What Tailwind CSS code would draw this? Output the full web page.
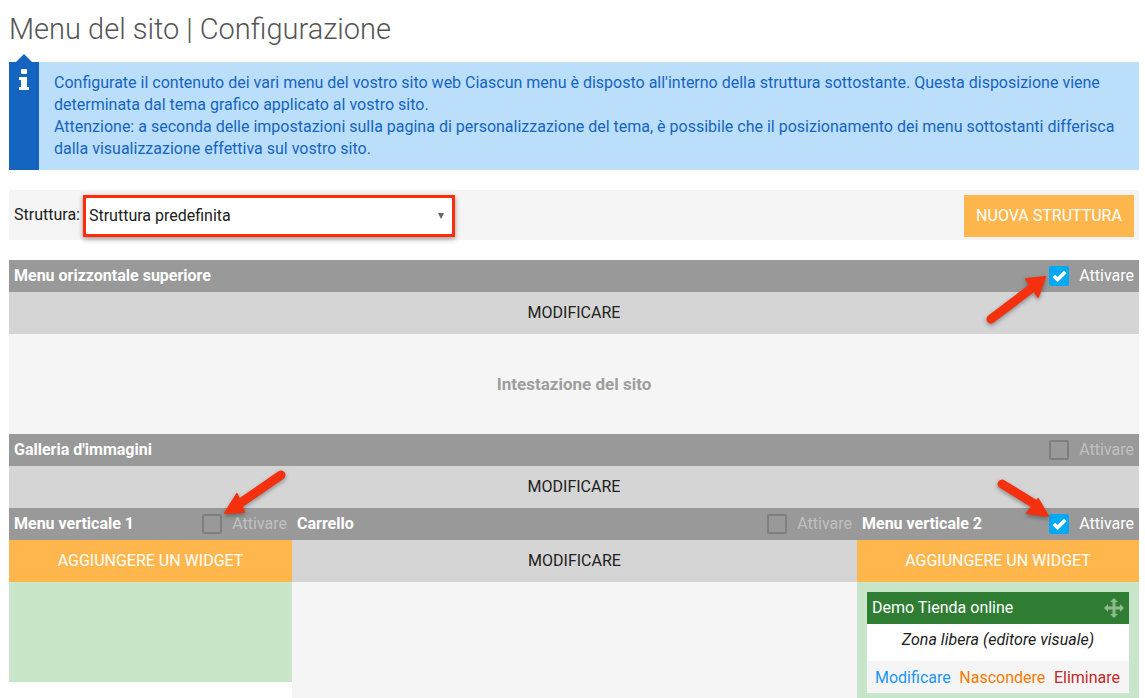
<!DOCTYPE html>
<html>
<head>
    <title>Menu del sito</title>
    <script src="https://cdn.jsdelivr.net/npm/@tailwindcss/browser@4"></script>
</head>
<body class="bg-white font-['Roboto',sans-serif] text-[16px] text-[#212121] overflow-hidden">
<div class="w-[1139px] h-[698px] overflow-hidden relative pl-[9px]">
    <h1 class="h-[62px] pt-[10px] text-[29px] leading-[38px] font-light text-[#555]">Menu del sito | Configurazione</h1>

    <div class="flex h-[108px] bg-[#bbdefb] text-[#1565c0] relative">
        <div class="w-[30px] bg-[#1565c0] flex justify-center pt-[7px] relative">
            <span class="absolute left-[7px] top-[-8px] w-0 h-0 border-x-[8px] border-x-transparent border-b-[8px] border-b-[#1565c0]"></span>
            <svg width="10" height="21" viewBox="0 0 10 21" fill="#fff"><rect x="2" y="0" width="6" height="5" rx="1"/><path d="M0 8h8v10h2v3H0v-3h2v-7H0z"/></svg>
        </div>
        <p class="pl-[15px] pt-[10px] text-[16px] leading-[22px]">Configurate il contenuto dei vari menu del vostro sito web Ciascun menu è disposto all'interno della struttura sottostante. Questa disposizione viene<br>determinata dal tema grafico applicato al vostro sito.<br>Attenzione: a seconda delle impostazioni sulla pagina di personalizzazione del tema, è possibile che il posizionamento dei menu sottostanti differisca<br>dalla visualizzazione effettiva sul vostro sito.</p>
    </div>

    <div class="mt-[20px] h-[50px] bg-[#f5f5f5] flex items-center justify-between pl-[5px] pr-[5px] pt-[1px]">
        <div class="flex items-center">
            <span class="mr-[3px] mb-[2px]">Struttura:</span>
            <div class="w-[372px] h-[42px] bg-white border-[3px] border-[#fb2d0b] shadow-[0_2px_5px_rgba(0,0,0,0.4)] flex items-center justify-between pl-[3px] pr-[8px]">
                <span>Struttura predefinita</span>
                <span class="w-0 h-0 border-x-[3.5px] border-x-transparent border-t-[6px] border-t-[#666]"></span>
            </div>
        </div>
        <button class="w-[170px] h-[42px] bg-[#ffb74d] text-white text-[16px]">NUOVA STRUTTURA</button>
    </div>

    <div class="mt-[20px] h-[32px] bg-[#999] flex items-center justify-between pl-[5px] pr-[5px] text-white">
        <b class="font-bold">Menu orizzontale superiore</b>
        <div class="flex items-center gap-[10px]">
            <span class="w-[20px] h-[20px] rounded-[2px] bg-[#03a9f4] flex items-center justify-center">
                <svg width="15" height="12" viewBox="0 0 15 12"><path d="M1.8 6L5.6 9.600L13.200 2" fill="none" stroke="#fff" stroke-width="3.600"/></svg>
            </span>
            <span>Attivare</span>
        </div>
    </div>
    <div class="h-[42px] bg-[#d5d5d5] flex items-center justify-center">MODIFICARE</div>
    <div class="h-[100px] bg-[#f5f5f5] flex items-center justify-center pt-[1px] font-bold text-[17px] text-[#9e9e9e]">Intestazione del sito</div>

    <div class="h-[32px] bg-[#999] flex items-center justify-between pl-[5px] pr-[5px] text-white">
        <b class="font-bold">Galleria d'immagini</b>
        <div class="flex items-center gap-[10px] text-white/40">
            <span class="w-[20px] h-[20px] rounded-[2px] border-2 border-[#7f7f7f]"></span>
            <span>Attivare</span>
        </div>
    </div>
    <div class="h-[42px] bg-[#d5d5d5] flex items-center justify-center">MODIFICARE</div>

    <div class="grid grid-cols-[283px_565px_282px]">
        <div>
            <div class="h-[32px] bg-[#999] flex items-center justify-between pl-[5px] pr-[5px] text-white">
                <b class="font-bold">Menu verticale 1</b>
                <div class="flex items-center gap-[10px] text-white/40">
                    <span class="w-[20px] h-[20px] rounded-[2px] border-2 border-[#7f7f7f]"></span>
                    <span>Attivare</span>
                </div>
            </div>
            <div class="h-[42px] bg-[#ffb74d] text-white flex items-center justify-center">AGGIUNGERE UN WIDGET</div>
            <div class="h-[100px] bg-[#c8e6c9]"></div>
        </div>
        <div>
            <div class="h-[32px] bg-[#999] flex items-center justify-between pl-[5px] pr-[5px] text-white">
                <b class="font-bold">Carrello</b>
                <div class="flex items-center gap-[10px] text-white/40">
                    <span class="w-[20px] h-[20px] rounded-[2px] border-2 border-[#7f7f7f]"></span>
                    <span>Attivare</span>
                </div>
            </div>
            <div class="h-[42px] bg-[#d5d5d5] flex items-center justify-center">MODIFICARE</div>
            <div class="h-[116px] bg-[#f5f5f5]"></div>
        </div>
        <div>
            <div class="h-[32px] bg-[#999] flex items-center justify-between pl-[5px] pr-[5px] text-white">
                <b class="font-bold">Menu verticale 2</b>
                <div class="flex items-center gap-[10px]">
                    <span class="w-[20px] h-[20px] rounded-[2px] bg-[#03a9f4] flex items-center justify-center">
                        <svg width="15" height="12" viewBox="0 0 15 12"><path d="M1.8 6L5.6 9.600L13.200 2" fill="none" stroke="#fff" stroke-width="3.600"/></svg>
                    </span>
                    <span>Attivare</span>
                </div>
            </div>
            <div class="h-[42px] bg-[#ffb74d] text-white flex items-center justify-center">AGGIUNGERE UN WIDGET</div>
            <div class="h-[116px] bg-[#c8e6c9] px-[10px] pt-[10px]">
                <div class="h-[32px] bg-[#2e7d32] text-white flex items-center justify-between pl-[5px] pr-[5px]">
                    <span>Demo Tienda online</span>
                    <svg width="20" height="20" viewBox="0 0 20 20" fill="#8dbb90"><path d="M10 0l4 4h-2.500v4.500H16V6l4 4-4 4v-2.500h-4.500V16H14l-4 4-4-4h2.500v-4.500H4V14l-4-4 4-4v2.500h4.500V4H6z"/></svg>
                </div>
                <div class="h-[37px] bg-white flex items-center justify-center italic pb-[5px] tracking-[0.03px]">Zona libera (editore visuale)</div>
                <div class="h-[32px] bg-[#f5f5f5] flex items-center justify-between pl-[8px] pr-[9px] pt-[1px]">
                    <span class="text-[#2196f3]">Modificare</span>
                    <span class="text-[#f57c00]">Nascondere</span>
                    <span class="text-[#c62828]">Eliminare</span>
                </div>
            </div>
        </div>
    </div>

    <!-- frecce rosse sopra la pagina -->
    <svg class="absolute left-0 top-0 pointer-events-none" width="1139" height="698" viewBox="0 0 1139 698">
        <g style="filter:drop-shadow(0 2px 2px rgba(0,0,0,.35))">
            <g stroke="#f5300f" stroke-width="9" stroke-linecap="round" fill="none">
                <path d="M991 319L1032 288"/>
                <path d="M281 475L236 506"/>
                <path d="M1002 484L1038 506"/>
            </g>
            <g fill="#f5300f" stroke="#f5300f" stroke-width="2" stroke-linejoin="round">
                <path d="M1045 277L1026 279L1038 297Z"/>
                <path d="M225 513L237 494L244 512Z"/>
                <path d="M1048 516L1038 499L1027 513Z"/>
            </g>
        </g>
    </svg>
</div>
</body>
</html>
